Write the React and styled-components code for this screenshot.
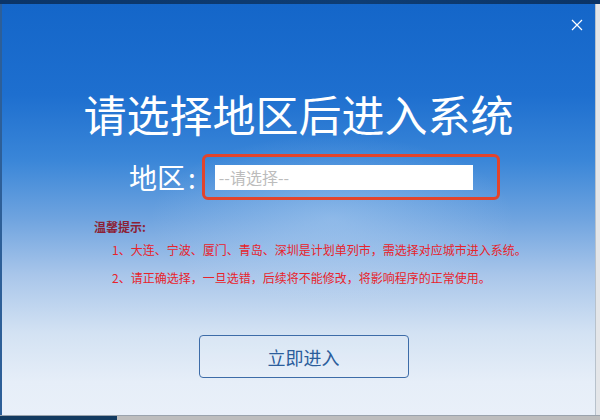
import React from 'react';
import styled, { createGlobalStyle } from 'styled-components';

const GlobalStyle = createGlobalStyle`
  html, body {
    margin: 0;
    padding: 0;
    background: #c4c4c4;
  }
  body {
    font-family: "Noto Sans CJK SC", "Noto Sans", sans-serif;
  }
`;

const Screen = styled.div`
  width: 600px;
  height: 420px;
  display: flex;
  flex-direction: column;
  overflow: hidden;
`;

const TopBand = styled.div`
  height: 4px;
  background: linear-gradient(90deg, #0b3568, #0e3d74 60%, #0b3466);
`;

const Middle = styled.div`
  flex: 1;
  display: flex;
  min-height: 0;
`;

const Dialog = styled.div`
  position: relative;
  flex: 1;
  display: flex;
  flex-direction: column;
  align-items: center;
  border-left: 2px solid #2d5f98;
  background:
    radial-gradient(ellipse 260px 120px at 330px 215px, rgba(200, 225, 250, 0.35), rgba(200, 225, 250, 0) 70%),
    linear-gradient(180deg, #1466c9 0%, #1e6fcf 22%, #3a86d8 38%, #6ea3df 52%, #a9c6ea 66%, #d3e2f3 80%, #e6eef8 92%, #e9f0f9 100%);
`;

const RightStrip = styled.div`
  width: 4px;
  background: #e4e6e9;
  border-left: 1px solid #b8c2cc;
`;

const BottomBar = styled.div`
  height: 4px;
  display: flex;
  background: #bdbdbd;
  border-top: 1px solid #9aa3ad;
`;

const TaskSegment = styled.div`
  width: 117px;
  background: #123a60;
`;

const Close = styled.button`
  position: absolute;
  top: 13px;
  right: 10px;
  width: 16px;
  height: 16px;
  padding: 0;
  border: none;
  background: transparent;
  display: flex;
  align-items: center;
  justify-content: center;
`;

const Title = styled.h1`
  margin: 83px 0 0;
  font-size: 43px;
  line-height: 52px;
  font-weight: 400;
  color: #ffffff;
  white-space: nowrap;
`;

const FormRow = styled.div`
  margin-top: 15px;
  align-self: stretch;
  display: flex;
  align-items: center;
  padding-left: 127px;
  gap: 6px;
`;

const Label = styled.span`
  font-size: 28px;
  line-height: 34px;
  color: #ffffff;
  white-space: nowrap;
`;

const Colon = styled.span`
  margin-left: 3px;
`;

const Highlight = styled.div`
  width: 298px;
  height: 46px;
  box-sizing: border-box;
  border: 3px solid #e2442c;
  border-radius: 6px;
  display: flex;
  align-items: center;
  padding-left: 10px;
`;

const Select = styled.div`
  width: 258px;
  height: 25px;
  box-sizing: border-box;
  background: #ffffff;
  display: flex;
  align-items: center;
  padding-left: 4px;
  font-size: 16px;
  color: #bcbcbc;
  white-space: nowrap;
`;

const Hints = styled.div`
  align-self: stretch;
  margin-top: 19px;
  padding-left: 92px;
  display: flex;
  flex-direction: column;
`;

const HintTitle = styled.div`
  font-size: 12px;
  line-height: 16px;
  font-weight: 700;
  color: #8c1f35;
`;

const HintLine = styled.div`
  margin-top: ${p => p.$gap}px;
  padding-left: 18px;
  font-size: 12px;
  line-height: 16px;
  color: #e8232b;
  white-space: nowrap;
`;

const EnterButton = styled.button`
  margin: 49px 0 0 10px;
  width: 210px;
  height: 43px;
  box-sizing: border-box;
  border: 1.5px solid #3d6ca8;
  border-radius: 4px;
  background: rgba(255, 255, 255, 0.12);
  color: #2b5d9c;
  font-family: "Noto Sans CJK SC", "Noto Sans", sans-serif;
  font-size: 18px;
  padding: 0;
`;

export default function App() {
  return (
    <>
      <GlobalStyle />
      <Screen>
        <TopBand />
        <Middle>
          <Dialog>
            <Close aria-label="关闭">
              <svg width="12" height="12" viewBox="0 0 12 12">
                <path d="M1 1 L11 11 M11 1 L1 11" stroke="#ffffff" strokeWidth="1.2" fill="none" />
              </svg>
            </Close>
            <Title>请选择地区后进入系统</Title>
            <FormRow>
              <Label>
                地区<Colon>:</Colon>
              </Label>
              <Highlight>
                <Select>--请选择--</Select>
              </Highlight>
            </FormRow>
            <Hints>
              <HintTitle>温馨提示:</HintTitle>
              <HintLine $gap={7}>1、大连、宁波、厦门、青岛、深圳是计划单列市，需选择对应城市进入系统。</HintLine>
              <HintLine $gap={12}>2、请正确选择，一旦选错，后续将不能修改，将影响程序的正常使用。</HintLine>
            </Hints>
            <EnterButton>立即进入</EnterButton>
          </Dialog>
          <RightStrip />
        </Middle>
        <BottomBar>
          <TaskSegment />
        </BottomBar>
      </Screen>
    </>
  );
}
